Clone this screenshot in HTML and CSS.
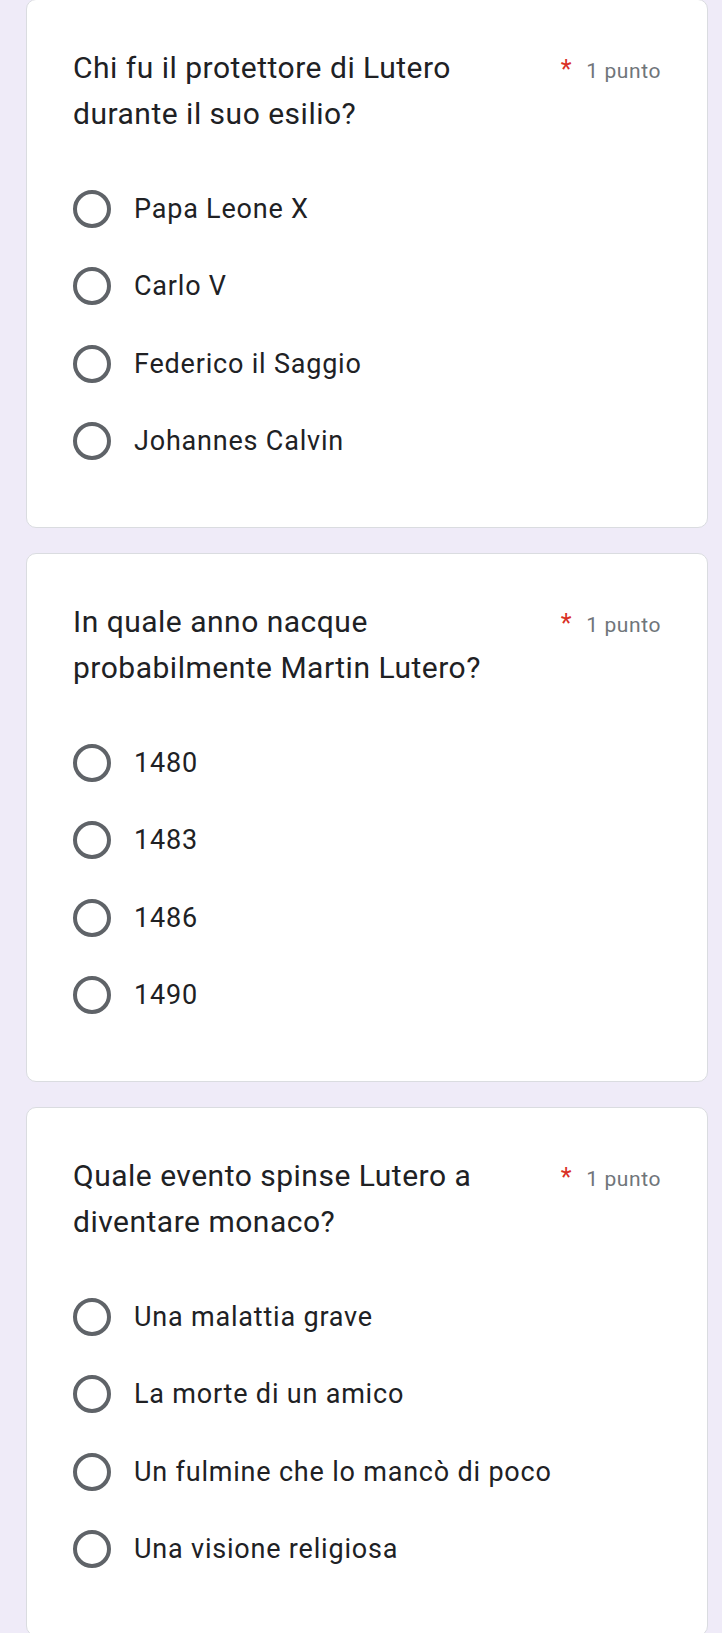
FILE: index.html
```html
<!DOCTYPE html>
<html>

<head>
    <meta name="viewport" content="width=device-width, initial-scale=1">
    <title>Quiz Lutero</title>

    <link rel="stylesheet" href="styles.css">

</head>

<body>
    <div class="form">

        <div class="card">
            <div class="question-head">
                <div class="question-title">Chi fu il protettore di Lutero durante il suo esilio?</div>
                <div class="points"><span class="required">*</span>1 punto</div>
            </div>
            <div class="options">
                <label class="option"><input type="radio" name="q1"><span class="option-text">Papa Leone X</span></label>
                <label class="option"><input type="radio" name="q1"><span class="option-text">Carlo V</span></label>
                <label class="option"><input type="radio" name="q1"><span class="option-text">Federico il Saggio</span></label>
                <label class="option"><input type="radio" name="q1"><span class="option-text">Johannes Calvin</span></label>
            </div>
        </div>

        <div class="card">
            <div class="question-head">
                <div class="question-title">In quale anno nacque probabilmente Martin Lutero?</div>
                <div class="points"><span class="required">*</span>1 punto</div>
            </div>
            <div class="options">
                <label class="option"><input type="radio" name="q2"><span class="option-text">1480</span></label>
                <label class="option"><input type="radio" name="q2"><span class="option-text">1483</span></label>
                <label class="option"><input type="radio" name="q2"><span class="option-text">1486</span></label>
                <label class="option"><input type="radio" name="q2"><span class="option-text">1490</span></label>
            </div>
        </div>

        <div class="card">
            <div class="question-head">
                <div class="question-title">Quale evento spinse Lutero a diventare monaco?</div>
                <div class="points"><span class="required">*</span>1 punto</div>
            </div>
            <div class="options">
                <label class="option"><input type="radio" name="q3"><span class="option-text">Una malattia grave</span></label>
                <label class="option"><input type="radio" name="q3"><span class="option-text">La morte di un amico</span></label>
                <label class="option"><input type="radio" name="q3"><span class="option-text">Un fulmine che lo mancò di poco</span></label>
                <label class="option"><input type="radio" name="q3"><span class="option-text">Una visione religiosa</span></label>
            </div>
        </div>

    </div>
</body>

</html>
```

FILE: styles.css
```css
body {
    margin: 0;
    background-color: #efebf8;
    font-family: Roboto, "Liberation Sans", sans-serif;
    color: #202124;
}

.form {
    display: flex;
    flex-direction: column;
    gap: 25px;
    margin-top: -1px;
    padding: 0 14px 0 26px;
}

.card {
    background-color: #fff;
    border: 1px solid #dadce0;
    border-radius: 10px;
    padding: 45px 46px 47px 46px;
}

.question-head {
    display: flex;
    align-items: baseline;
}

.question-title {
    flex: 1;
    font-size: 30px;
    line-height: 46px;
    letter-spacing: 0.5px;
}

.points {
    flex: none;
    margin-left: 14px;
    font-size: 21px;
    line-height: 46px;
    letter-spacing: 0.6px;
    color: #70757a;
}

.required {
    color: #d93025;
    font-size: 25px;
    margin-right: 14px;
}

.options {
    margin-top: 33px;
}

.option {
    display: flex;
    align-items: center;
    height: 77.5px;
    cursor: pointer;
}

.option input {
    -webkit-appearance: none;
    appearance: none;
    box-sizing: border-box;
    width: 38px;
    height: 38px;
    margin: 0;
    border: 4px solid #5f6368;
    border-radius: 50%;
    flex: none;
}

.option-text {
    margin-left: 23px;
    font-size: 27px;
    letter-spacing: 0.8px;
}
```
